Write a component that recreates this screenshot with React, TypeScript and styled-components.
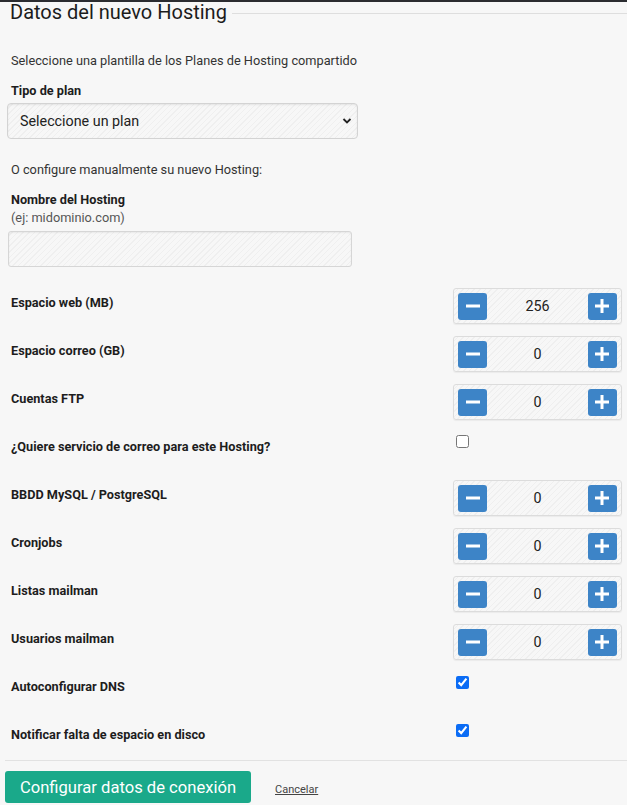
import React from 'react';
import styled, { createGlobalStyle } from 'styled-components';

const GlobalStyle = createGlobalStyle`
  body {
    margin: 0;
    background: #f7f7f7;
    font-family: Roboto, "Liberation Sans", Arial, sans-serif;
    color: #222;
  }
`;

const stripes = `repeating-linear-gradient(
  -45deg,
  #f7f7f7 0px,
  #f7f7f7 3px,
  #efefef 3px,
  #efefef 4px
)`;

const Page = styled.div`
  border-top: 2px solid #2b2c30;
  width: 627px;
  height: 803px;
  overflow: hidden;
`;

const Header = styled.div`
  display: flex;
  align-items: center;
  height: 24px;
`;

const Title = styled.h2`
  margin: 0 5px 0 10px;
  font-size: 20px;
  font-weight: 400;
  line-height: 22px;
  color: #1c1c1c;
  position: relative;
  top: -2px;
`;

const Rule = styled.div`
  flex: 1;
  border-top: 1px solid #dedede;
  margin-top: -1px;
`;

const Intro = styled.p<{ $top: number }>`
  margin: ${(p) => p.$top}px 0 0 11px;
  font-size: 12.75px;
  line-height: 16px;
  color: #333;
`;

const FieldLabel = styled.div`
  font-size: 12.7px;
  font-weight: 700;
  line-height: 16px;
  color: #1d1d1d;
`;

const Hint = styled.div`
  font-size: 12.75px;
  line-height: 20px;
  color: #555;
`;

const Block = styled.div<{ $top: number }>`
  margin: ${(p) => p.$top}px 0 0 11px;
`;

const SelectWrap = styled.div`
  position: relative;
  width: 351px;
  margin: 4px 0 0 -4px;
`;

const Select = styled.select`
  appearance: none;
  width: 100%;
  height: 36px;
  padding: 0 30px 0 12px;
  font-family: inherit;
  font-size: 14.3px;
  color: #222;
  border: 1px solid #d3d3d3;
  border-radius: 4px;
  background: ${stripes};
  box-shadow: inset 0 1px 2px rgba(0, 0, 0, 0.08);
  outline: none;
`;

const Chevron = styled.svg`
  position: absolute;
  right: 6px;
  top: 14px;
  pointer-events: none;
`;

const TextInput = styled.input`
  display: block;
  box-sizing: border-box;
  width: 344px;
  height: 36px;
  margin: 3px 0 0 -3px;
  border: 1px solid #d6d6d6;
  border-radius: 3px;
  background: ${stripes};
  box-shadow: inset 0 1px 2px rgba(0, 0, 0, 0.06);
  outline: none;
`;

const Rows = styled.div`
  margin-top: 17px;
`;

const Row = styled.div`
  display: grid;
  grid-template-columns: 1fr 169px;
  height: 48px;
  padding: 0 5px 0 11px;
  align-items: start;
`;

const RowLabel = styled.label`
  padding-top: 11px;
  font-size: 12.7px;
  font-weight: 700;
  line-height: 16px;
  color: #1d1d1d;
`;

const Spinner = styled.div`
  display: flex;
  align-items: center;
  justify-content: space-between;
  box-sizing: border-box;
  height: 36px;
  margin-top: 4px;
  padding: 0 4px;
  border: 1px solid #dcdcdc;
  border-radius: 3px;
  background: ${stripes};
  box-shadow: 0 1px 1px rgba(0, 0, 0, 0.05);
`;

const StepButton = styled.button`
  display: flex;
  align-items: center;
  justify-content: center;
  width: 29px;
  height: 27px;
  padding: 0;
  border: none;
  border-radius: 3px;
  background: #3d84c7;
  cursor: pointer;
`;

const Value = styled.span`
  font-size: 14.3px;
  color: #222;
`;

const Check = styled.input<{ $top: number }>`
  width: 13px;
  height: 13px;
  margin: ${(p) => p.$top}px 0 0 3px;
  accent-color: #0b6cf5;
`;

const Footer = styled.div`
  border-top: 1px solid #e2e2e2;
  margin: -4px 0 0 5px;
  padding-top: 10px;
  display: flex;
  align-items: center;
  gap: 24px;
`;

const Primary = styled.button`
  height: 32px;
  width: 246px;
  border: none;
  border-radius: 3px;
  background: #1aa98a;
  color: #fff;
  font-family: inherit;
  font-size: 16.6px;
  padding: 0;
`;

const CancelLink = styled.a`
  font-size: 11px;
  color: #444;
  text-decoration: underline;
  margin-top: 4px;
`;

const Minus = () => (
  <svg width="14" height="14" viewBox="0 0 14 14">
    <rect x="0" y="5.5" width="14" height="3" fill="#fff" />
  </svg>
);

const Plus = () => (
  <svg width="14" height="14" viewBox="0 0 14 14">
    <rect x="0" y="5.5" width="14" height="3" fill="#fff" />
    <rect x="5.5" y="0" width="3" height="14" fill="#fff" />
  </svg>
);

type Field =
  | { kind: 'num'; label: string; value: number }
  | { kind: 'check'; label: string; checked: boolean; top: number };

const fields: Field[] = [
  { kind: 'num', label: 'Espacio web (MB)', value: 256 },
  { kind: 'num', label: 'Espacio correo (GB)', value: 0 },
  { kind: 'num', label: 'Cuentas FTP', value: 0 },
  { kind: 'check', label: '¿Quiere servicio de correo para este Hosting?', checked: false, top: 7 },
  { kind: 'num', label: 'BBDD MySQL / PostgreSQL', value: 0 },
  { kind: 'num', label: 'Cronjobs', value: 0 },
  { kind: 'num', label: 'Listas mailman', value: 0 },
  { kind: 'num', label: 'Usuarios mailman', value: 0 },
  { kind: 'check', label: 'Autoconfigurar DNS', checked: true, top: 8 },
  { kind: 'check', label: 'Notificar falta de espacio en disco', checked: true, top: 8 },
];

export default function App() {
  return (
    <Page>
      <GlobalStyle />
      <Header>
        <Title>Datos del nuevo Hosting</Title>
        <Rule />
      </Header>
      <Intro $top={27}>Seleccione una plantilla de los Planes de Hosting compartido</Intro>
      <Block $top={14}>
        <FieldLabel>Tipo de plan</FieldLabel>
        <SelectWrap>
          <Select defaultValue="">
            <option value="">Seleccione un plan</option>
          </Select>
          <Chevron width="10" height="8" viewBox="0 0 10 8">
            <path d="M1.5 2 L5 5.5 L8.5 2" fill="none" stroke="#222" strokeWidth="1.8" />
          </Chevron>
        </SelectWrap>
      </Block>
      <Intro $top={23}>O configure manualmente su nuevo Hosting:</Intro>
      <Block $top={14}>
        <FieldLabel>Nombre del Hosting</FieldLabel>
        <Hint>(ej: midominio.com)</Hint>
        <TextInput type="text" />
      </Block>
      <Rows>
        {fields.map((f) => (
          <Row key={f.label}>
            <RowLabel>{f.label}</RowLabel>
            {f.kind === 'num' ? (
              <Spinner>
                <StepButton>
                  <Minus />
                </StepButton>
                <Value>{f.value}</Value>
                <StepButton>
                  <Plus />
                </StepButton>
              </Spinner>
            ) : (
              <div>
                <Check type="checkbox" defaultChecked={f.checked} $top={f.top} />
              </div>
            )}
          </Row>
        ))}
      </Rows>
      <Footer>
        <Primary>Configurar datos de conexión</Primary>
        <CancelLink href="#">Cancelar</CancelLink>
      </Footer>
    </Page>
  );
}
